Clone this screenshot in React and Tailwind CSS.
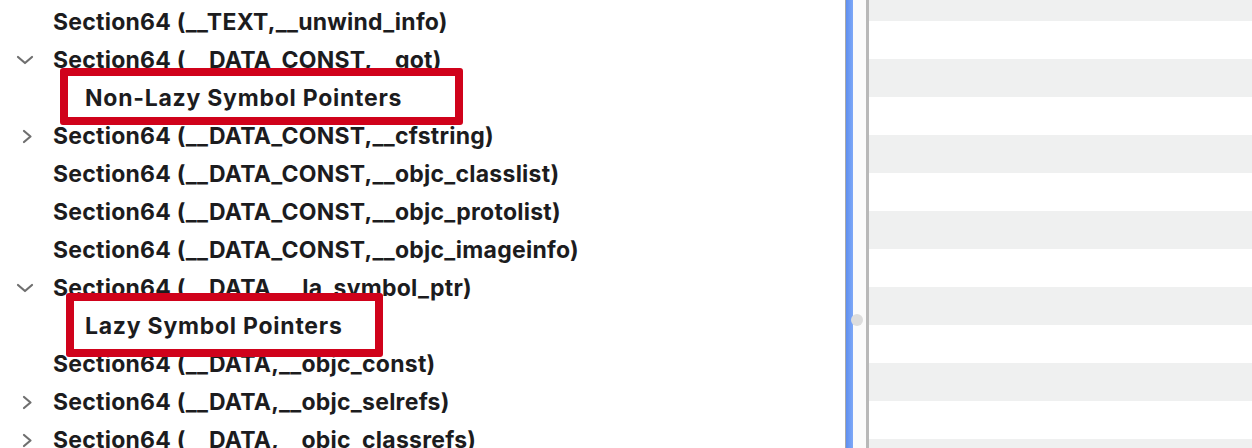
import React from 'react';

const ROWS = [
  { label: 'Section64 (__TEXT,__unwind_info)' },
  { label: 'Section64 (__DATA_CONST,__got)', chevron: 'down' },
  { label: 'Non-Lazy Symbol Pointers', child: true },
  { label: 'Section64 (__DATA_CONST,__cfstring)', chevron: 'right' },
  { label: 'Section64 (__DATA_CONST,__objc_classlist)' },
  { label: 'Section64 (__DATA_CONST,__objc_protolist)' },
  { label: 'Section64 (__DATA_CONST,__objc_imageinfo)' },
  { label: 'Section64 (__DATA,__la_symbol_ptr)', chevron: 'down' },
  { label: 'Lazy Symbol Pointers', child: true },
  { label: 'Section64 (__DATA,__objc_const)' },
  { label: 'Section64 (__DATA,__objc_selrefs)', chevron: 'right' },
  { label: 'Section64 (__DATA,__objc_classrefs)', chevron: 'right' },
];

function Chevron({ dir }) {
  if (dir === 'down') {
    return (
      <svg width="18" height="10" viewBox="0 0 18 10" className="ml-[16px]">
        <path d="M2 2 L9 8 L16 2" fill="none" stroke="#6f6f6f" strokeWidth="2.2" strokeLinecap="round" strokeLinejoin="round" />
      </svg>
    );
  }
  return (
    <svg width="11" height="15" viewBox="0 0 11 15" className="ml-[22px]">
      <path d="M2 2 L8.5 7.5 L2 13" fill="none" stroke="#6f6f6f" strokeWidth="2.2" strokeLinecap="round" strokeLinejoin="round" />
    </svg>
  );
}

function TreeRow({ row }) {
  return (
    <div className="flex items-center h-[38px] shrink-0">
      <div className="w-[53px] shrink-0 flex items-center">
        {row.chevron && <Chevron dir={row.chevron} />}
      </div>
      <span
        className={
          'whitespace-nowrap leading-none ' +
          (row.child ? 'pl-[32px] tracking-[0.75px]' : '')
        }
      >
        {row.label}
      </span>
    </div>
  );
}

export default function App() {
  const stripes = Array.from({ length: 12 }, (_, i) => i);

  return (
    <div
      className="w-[1252px] h-[448px] overflow-hidden flex bg-white text-[#1c1c1e] font-bold text-[23px] tracking-[0.25px]"
      style={{ fontFamily: 'Inter, "Noto Sans", sans-serif' }}
    >
      {/* outline view */}
      <div className="relative w-[845px] shrink-0 flex flex-col pt-[3px]">
        {ROWS.map((row, i) => (
          <TreeRow key={i} row={row} />
        ))}

        {/* annotation boxes */}
        <div className="absolute left-[60px] top-[68px] w-[403px] h-[57px] border-[8px] border-[#d0021b] rounded-[3px]" />
        <div className="absolute left-[66px] top-[293px] w-[317px] h-[64px] border-[8px] border-[#d0021b] rounded-[3px]" />
      </div>

      {/* split divider */}
      <div className="relative flex shrink-0 h-full">
        <div className="w-px bg-[#a9a9a9]" />
        <div className="w-[7px] bg-gradient-to-r from-[#5f8ff0] to-[#7ea8f7]" />
        <div className="w-[13px] bg-[#fbfbfb]" />
        <div className="w-[3px] bg-[#b8b8b8]" />
        <div className="absolute left-[6px] top-[314px] w-[12px] h-[12px] rounded-full bg-[#dddddd]" />
      </div>

      {/* striped table */}
      <div className="flex-1 flex flex-col">
        <div className="h-[21px] shrink-0 bg-[#eff0f0]" />
        {stripes.map((i) => (
          <div key={i} className={'h-[38px] shrink-0 ' + (i % 2 === 0 ? 'bg-white' : 'bg-[#eff0f0]')} />
        ))}
      </div>
    </div>
  );
}
